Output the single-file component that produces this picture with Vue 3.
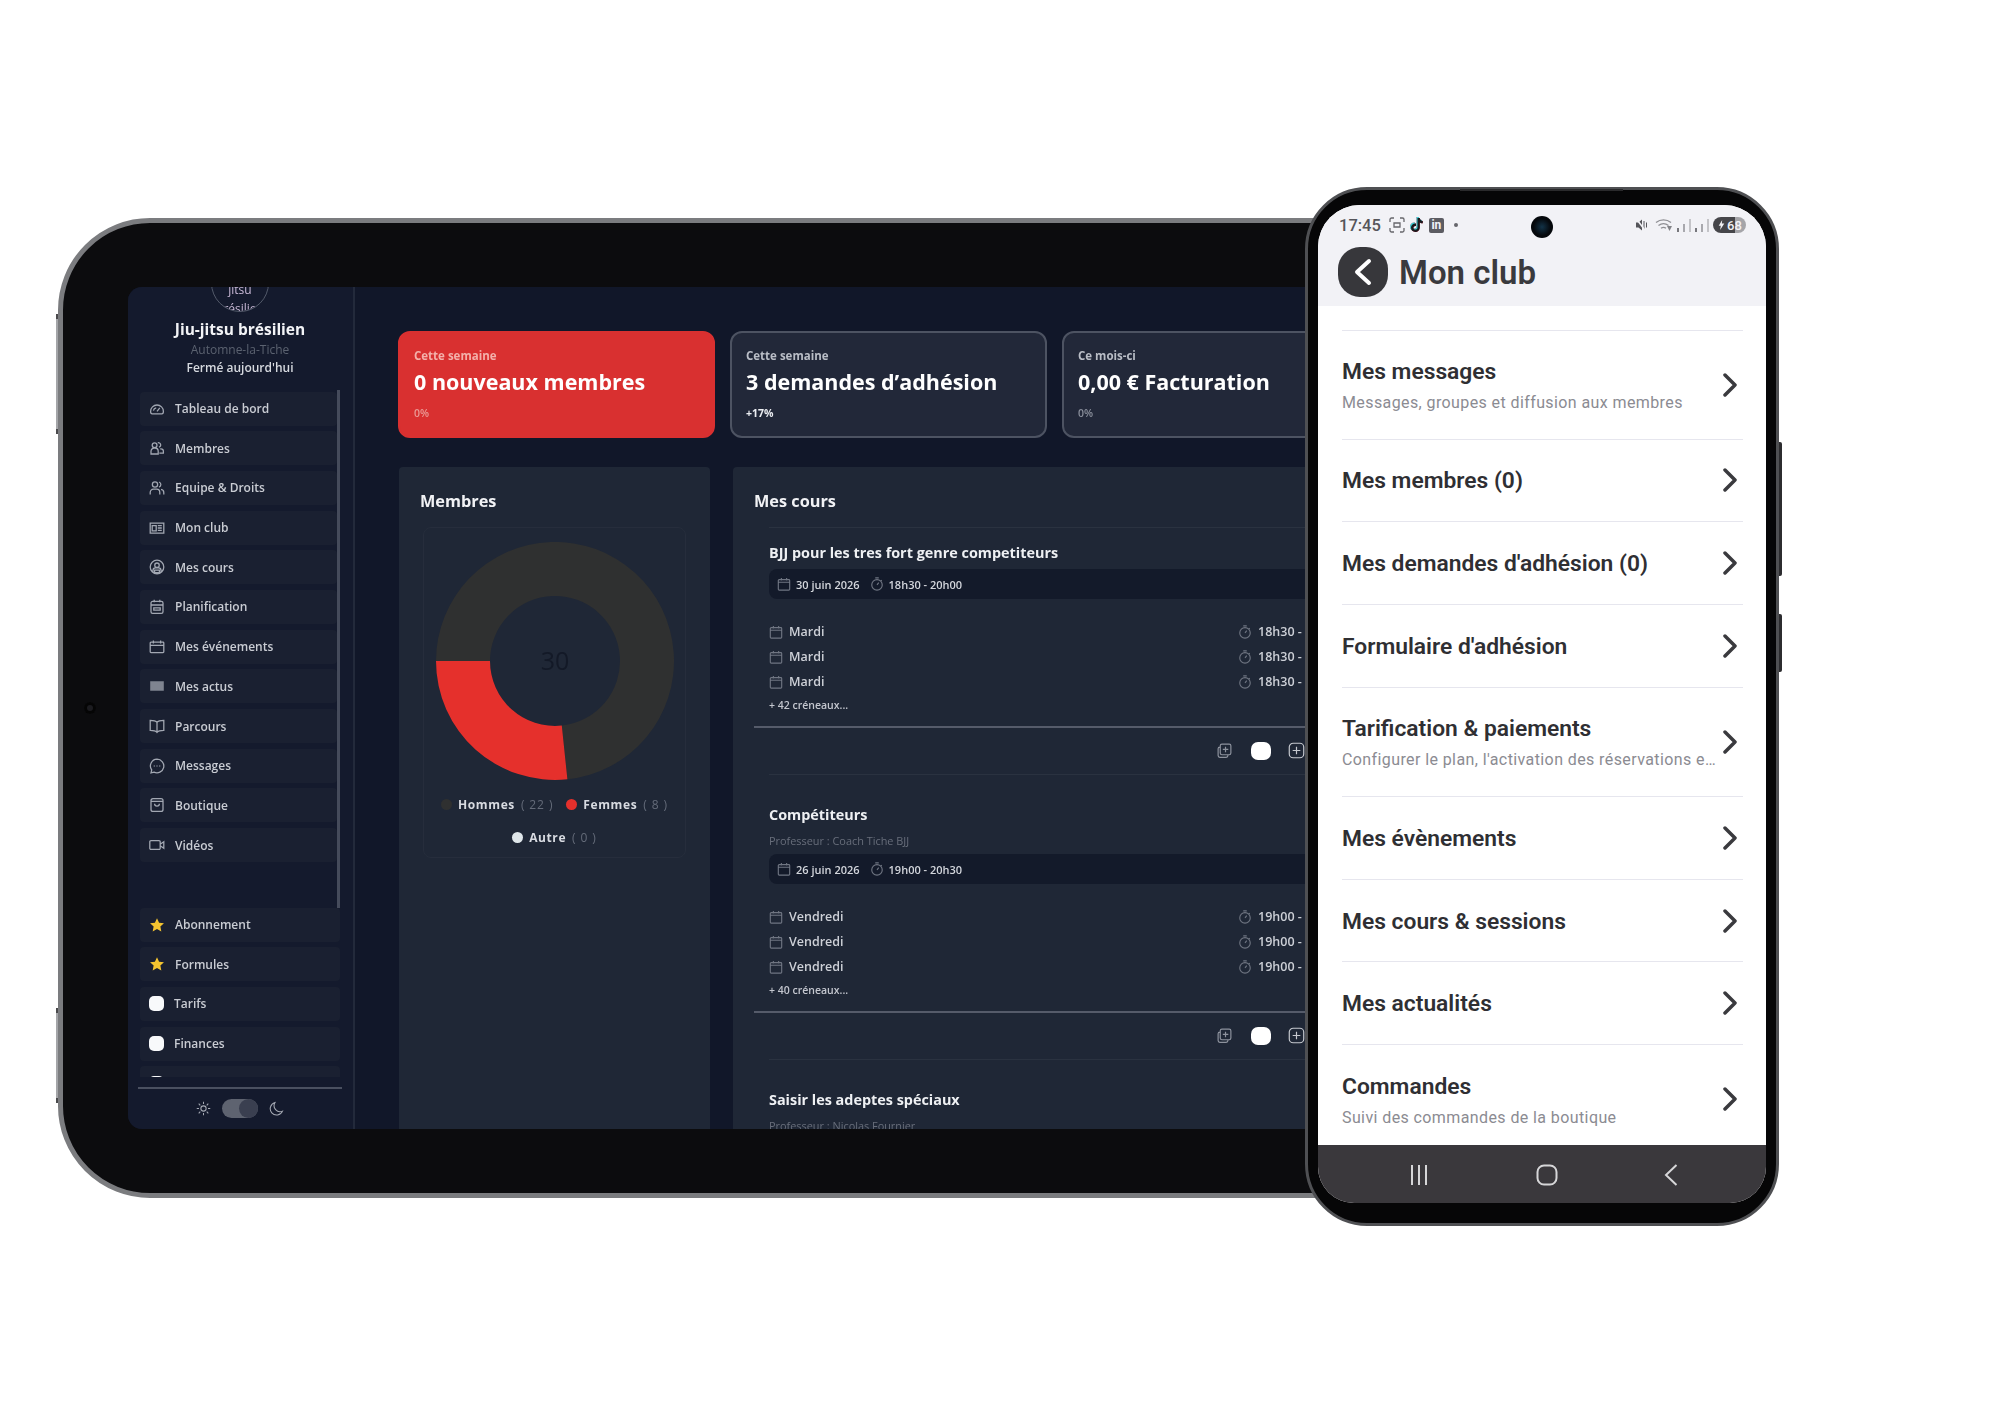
<template>
  <div class="stage">
    <div class="tablet">
      <span class="side-btn btn-a"></span>
      <span class="side-btn btn-b"></span>
      <span class="tablet-cam"></span>
      <div class="screen">
        <aside class="sidebar">
          <div class="logo"><span>Jiu-</span><span>jitsu</span><span>brésilien</span></div>
          <h1 class="club-name">Jiu-jitsu brésilien</h1>
          <p class="club-city">Automne-la-Tiche</p>
          <p class="club-state">Fermé aujourd'hui</p>

          <nav class="nav nav-main">
            <a v-for="item in mainNav" :key="item.label" class="nav-item">
              <svg class="nav-icon" :class="{ solid: item.solid }" viewBox="0 0 20 20"><path :d="item.icon" /></svg>
              {{ item.label }}
            </a>
          </nav>
          <nav class="nav nav-extra">
            <a v-for="item in extraNav" :key="item.label" class="nav-item">
              <svg v-if="item.star" class="nav-icon star" viewBox="0 0 20 20">
                <path d="M10 1.500l2.600 5.600 6.100.7-4.500 4.200 1.200 6-5.400-3-5.400 3 1.200-6L1.300 7.800l6.100-.7z" />
              </svg>
              <span v-else class="blob"></span>
              {{ item.label }}
            </a>
          </nav>

          <div class="theme">
            <svg class="theme-icon" viewBox="0 0 20 20">
              <path d="M10 6.500a3.500 3.500 0 1 0 0 7 3.500 3.500 0 0 0 0-7z M10 1v3 M10 16v3 M1 10h3 M16 10h3 M3.600 3.600l2.100 2.100 M14.300 14.300l2.100 2.100 M3.600 16.400l2.100-2.100 M14.300 5.700l2.100-2.100" />
            </svg>
            <span class="switch"><span class="knob"></span></span>
            <svg class="theme-icon" viewBox="0 0 20 20">
              <path d="M8 2a8 8 0 0 0 10 11.500A8.500 8.500 0 1 1 8 2z" />
            </svg>
          </div>
        </aside>

        <main class="main">
          <section class="stats">
            <div v-for="s in stats" :key="s.title" class="stat" :class="{ red: s.red }">
              <p class="stat-label">{{ s.label }}</p>
              <p class="stat-title">{{ s.title }}</p>
              <p class="stat-delta" :class="{ up: s.up }">{{ s.delta }}</p>
            </div>
          </section>

          <section class="panels">
            <div class="panel panel-members">
              <h2 class="panel-title">Membres</h2>
              <div class="chart-box">
                <svg class="donut" viewBox="0 0 238 238">
                  <path class="arc-dark" d="M0 119A119 119 0 1 1 131.400 237.300L125.800 183.600A65 65 0 1 0 54 119Z" />
                  <path class="arc-red" d="M0 119A119 119 0 0 0 131.400 237.300L125.800 183.600A65 65 0 0 1 54 119Z" />
                  <text x="119" y="128" text-anchor="middle" class="donut-total">30</text>
                </svg>
                <div class="legend">
                  <span v-for="l in legend" :key="l.name" class="legend-item">
                    <i class="dot" :class="l.cls"></i>
                    <b>{{ l.name }}</b>
                    <em>( {{ l.count }} )</em>
                  </span>
                </div>
              </div>
            </div>

            <div class="panel panel-courses">
              <h2 class="panel-title">Mes cours</h2>
              <article v-for="c in courses" :key="c.name" class="course">
                <h3 class="course-name">{{ c.name }}</h3>
                <p v-if="c.teacher" class="course-teacher">{{ c.teacher }}</p>
                <template v-if="c.date">
                  <div class="date-bar">
                    <svg class="mini" viewBox="0 0 16 16"><path :d="calendarIcon" /></svg>
                    <span>{{ c.date }}</span>
                    <svg class="mini clock" viewBox="0 0 16 16"><path :d="clockIcon" /></svg>
                    <span>{{ c.hours }}</span>
                  </div>
                  <ul class="slots">
                    <li v-for="n in 3" :key="n" class="slot">
                      <span class="slot-side">
                        <svg class="mini" viewBox="0 0 16 16"><path :d="calendarIcon" /></svg>
                        {{ c.day }}
                      </span>
                      <span class="slot-time">
                        <svg class="mini" viewBox="0 0 16 16"><path :d="clockIcon" /></svg>
                        {{ c.start }} -
                      </span>
                    </li>
                  </ul>
                  <p class="more">{{ c.more }}</p>
                  <div class="course-foot">
                    <svg class="act" viewBox="0 0 20 20">
                      <path d="M7 2.500h8.500a2 2 0 0 1 2 2V13a2 2 0 0 1-2 2H7a2 2 0 0 1-2-2V4.500a2 2 0 0 1 2-2z M5 6H4.500a2 2 0 0 0-2 2v8a2 2 0 0 0 2 2H12a2 2 0 0 0 2-2v-1 M11.200 5.500v6.500 M8 8.700h6.500" />
                    </svg>
                    <span class="act-blob"></span>
                    <svg class="act plus" viewBox="0 0 20 20">
                      <path d="M6 1.500h8A4.500 4.500 0 0 1 18.500 6v8a4.500 4.500 0 0 1-4.500 4.500H6A4.500 4.500 0 0 1 1.500 14V6A4.500 4.500 0 0 1 6 1.500z M10 5.500v9 M5.500 10h9" />
                    </svg>
                  </div>
                </template>
              </article>
            </div>
          </section>
        </main>
      </div>
    </div>

    <div class="phone">
      <span class="phone-line"></span>
      <span class="phone-key key-a"></span>
      <span class="phone-key key-b"></span>
      <div class="phone-screen">
        <div class="status">
          <span class="clock-text">17:45</span>
          <svg class="st-icon" viewBox="0 0 16 16">
            <path class="st-line" d="M1 5V2.500A1.500 1.500 0 0 1 2.500 1H5 M11 1h2.500A1.500 1.500 0 0 1 15 2.500V5 M15 11v2.500a1.500 1.500 0 0 1-1.500 1.500H11 M5 15H2.500A1.500 1.500 0 0 1 1 13.500V11 M5 6h6v4H5z" />
          </svg>
          <svg class="st-icon tiktok" viewBox="0 0 16 16">
            <path d="M8.500 1h2.300c.2 1.700 1.300 2.800 3 3v2.300c-1.100 0-2.100-.3-3-.9v5.100c0 2.600-2 4.500-4.500 4.500-2.400 0-4.300-1.900-4.300-4.200 0-2.600 2.200-4.600 5-4.200v2.400c-1.400-.3-2.600.6-2.600 1.800 0 1 .8 1.800 1.900 1.800 1.200 0 2.200-.9 2.200-2.200z" />
          </svg>
          <span class="linkedin">in</span>
          <span class="st-dot"></span>
          <span class="camera"></span>
          <span class="status-right">
            <svg class="mute" viewBox="0 0 13 14">
              <path d="M1 4.500h2.500L7 1.500v11L3.500 9.500H1z M8.500 3h1v8h-1z M11 4.500h1v5h-1z" />
              <path class="mute-slash" d="M1.500 1l9 12" />
            </svg>
            <svg class="wifi" viewBox="0 0 18 14">
              <path class="st-line" d="M1 4.500c4.500-3.500 10.500-3.500 15 0 M3.500 7.500c3.200-2.500 6.800-2.500 10 0 M6 10.300c1.600-1.200 3.400-1.200 5 0" />
              <path class="st-fill" d="M12 8h5l-2.500 5z" />
            </svg>
            <span class="bars"><i></i><i></i><i></i></span>
            <span class="bars"><i></i><i></i><i></i></span>
            <span class="battery">
              <svg viewBox="0 0 10 14"><path d="M6 0L1 8h3l-1 6 6-9H5.500z" /></svg>68
            </span>
          </span>
        </div>
        <header class="phone-head">
          <button class="back">
            <svg viewBox="0 0 20 30"><path d="M16 4L4 15l12 11" /></svg>
          </button>
          <span class="phone-title">Mon club</span>
        </header>
        <div class="menu">
          <div v-for="m in menu" :key="m.title" class="menu-row" :class="{ tall: m.sub }">
            <div class="menu-text">
              <p class="menu-title">{{ m.title }}</p>
              <p v-if="m.sub" class="menu-sub">{{ m.sub }}</p>
            </div>
            <svg class="chevron" viewBox="0 0 14 24"><path d="M2 2l10 10L2 22" /></svg>
          </div>
        </div>
        <div class="android-nav">
          <svg viewBox="0 0 20 22"><path d="M3 1v20 M10 1v20 M17 1v20" /></svg>
          <svg viewBox="0 0 22 22"><rect x="1.500" y="1.500" width="19" height="19" rx="6.500" /></svg>
          <svg viewBox="0 0 14 22"><path d="M12.500 1L2 11l10.500 10" /></svg>
        </div>
      </div>
    </div>
  </div>
</template>

<script setup>
const mainNav = [
  { label: 'Tableau de bord', icon: 'M2 13a8 8 0 1 1 16 0c0 2-1 3-2 3H4c-1 0-2-1-2-3z M10 13l3.500-4.500 M5.500 12a4.500 4.500 0 0 1 3.500-3.500' },
  { label: 'Membres', icon: 'M2.500 17.500v-3.500a4 4 0 0 1 4-4h1a4 4 0 0 1 4 4v3.500z M7 9.500a3 3 0 1 0 0-6 3 3 0 0 0 0 6z M11 3.500a2.800 2.800 0 1 1 1.500 5.500 M14 11h1a3 3 0 0 1 3 3v2.500h-5' },
  { label: 'Equipe & Droits', icon: 'M1.500 18v-2.500A4 4 0 0 1 5.500 11.500h4a4 4 0 0 1 4 4V18 M7.500 9a3.300 3.300 0 1 0 0-6.600 3.300 3.300 0 0 0 0 6.600z M12.500 2.500a3.300 3.300 0 0 1 0 6.300 M15 11.800a4 4 0 0 1 3.500 4V18' },
  { label: 'Mon club', icon: 'M1.500 4h17v12.500h-17z M4 7h5v6.500H4z M11 7h5 M11 10h5 M11 13h5' },
  { label: 'Mes cours', icon: 'M10 1.500a8.500 8.500 0 1 0 0 17 8.500 8.500 0 0 0 0-17z M10 5a2.800 2.800 0 1 0 0 5.600A2.800 2.800 0 0 0 10 5z M5 16v-2a3 3 0 0 1 3-3h4a3 3 0 0 1 3 3v2 M7 14h6v3H7z' },
  { label: 'Planification', icon: 'M4.500 3h11A2 2 0 0 1 17.500 5v11a2 2 0 0 1-2 2h-11a2 2 0 0 1-2-2V5a2 2 0 0 1 2-2z M2.500 7.500h15 M6.500 1v3 M13.500 1v3 M6 11h8v3H6z' },
  { label: 'Mes événements', icon: 'M2.500 4h15a1 1 0 0 1 1 1v11a1 1 0 0 1-1 1h-15a1 1 0 0 1-1-1V5a1 1 0 0 1 1-1z M1.500 8h17 M5.500 2v3.500 M14.500 2v3.500' },
  { label: 'Mes actus', icon: 'M1.500 4h17v12h-17z', solid: true },
  { label: 'Parcours', icon: 'M10 5.500C8.500 3.500 5 3 1.500 3v12.500c3.500 0 7 .5 8.500 2.500 1.500-2 5-2.500 8.500-2.500V3C15 3 11.500 3.500 10 5.500z M10 5.500V18' },
  { label: 'Messages', icon: 'M10 1.500a8.500 8.500 0 1 1-3.800 16.100L2.500 18.500l.9-3.500A8.500 8.500 0 0 1 10 1.500z M6 10h1 M9.500 10h1 M13 10h1' },
  { label: 'Boutique', icon: 'M5 2h10a2.500 2.500 0 0 1 2.500 2.500v11A2.500 2.500 0 0 1 15 18H5a2.500 2.500 0 0 1-2.500-2.500v-11A2.500 2.500 0 0 1 5 2z M2.500 5.500h15 M7 8.500c0 4 6 4 6 0' },
  { label: 'Vidéos', icon: 'M2.500 4.500h10a1.500 1.500 0 0 1 1.500 1.500v8a1.500 1.500 0 0 1-1.500 1.500h-10A1.500 1.500 0 0 1 1 14V6a1.500 1.500 0 0 1 1.500-1.500z M14 9l4.500-3v8L14 11' },
]

const extraNav = [
  { label: 'Abonnement', star: true },
  { label: 'Formules', star: true },
  { label: 'Tarifs' },
  { label: 'Finances' },
  { label: '' },
]

const stats = [
  { label: 'Cette semaine', title: '0 nouveaux membres', delta: '0%', red: true },
  { label: 'Cette semaine', title: '3 demandes d’adhésion', delta: '+17%', up: true },
  { label: 'Ce mois-ci', title: '0,00 € Facturation', delta: '0%' },
]

const legend = [
  { name: 'Hommes', count: 22, cls: 'dark' },
  { name: 'Femmes', count: 8, cls: 'red' },
  { name: 'Autre', count: 0, cls: 'light' },
]

const calendarIcon = 'M2.500 3h11a1 1 0 0 1 1 1v10a1 1 0 0 1-1 1h-11a1 1 0 0 1-1-1V4a1 1 0 0 1 1-1z M1.500 6h13 M5 1v3 M11 1v3'
const clockIcon = 'M8 3a6 6 0 1 0 0 12A6 6 0 0 0 8 3z M6 1h4 M8 9l2-2.500 M12.500 3.500l1 1'

const courses = [
  {
    name: 'BJJ pour les tres fort genre competiteurs',
    date: '30 juin 2026',
    hours: '18h30 - 20h00',
    day: 'Mardi',
    start: '18h30',
    more: '+ 42 créneaux...',
  },
  {
    name: 'Compétiteurs',
    teacher: 'Professeur : Coach Tiche BJJ',
    date: '26 juin 2026',
    hours: '19h00 - 20h30',
    day: 'Vendredi',
    start: '19h00',
    more: '+ 40 créneaux...',
  },
  { name: 'Saisir les adeptes spéciaux', teacher: 'Professeur : Nicolas Fournier' },
]

const menu = [
  { title: 'Mes messages', sub: 'Messages, groupes et diffusion aux membres' },
  { title: 'Mes membres (0)' },
  { title: "Mes demandes d'adhésion (0)" },
  { title: "Formulaire d'adhésion" },
  { title: 'Tarification & paiements', sub: "Configurer le plan, l'activation des réservations et les paiements" },
  { title: 'Mes évènements' },
  { title: 'Mes cours & sessions' },
  { title: 'Mes actualités' },
  { title: 'Commandes', sub: 'Suivi des commandes de la boutique' },
]
</script>

<style>
html,
body {
  margin: 0;
  background: #fff;
}
</style>

<style scoped>
.stage {
  position: relative;
  width: 2000px;
  height: 1414px;
  overflow: hidden;
  background: #fff;
  font-family: "Open Sans", "Liberation Sans", sans-serif;
}

p,
h1,
h2,
h3,
ul {
  margin: 0;
  padding: 0;
  list-style: none;
}

/* tablet */
.tablet {
  position: absolute;
  left: 58px;
  top: 218px;
  width: 1500px;
  height: 980px;
  box-sizing: border-box;
  padding: 64px 0 64px 65px;
  background: #0c0c0e;
  border: 5px solid #7b7c7f;
  border-radius: 92px;
}

.side-btn {
  position: absolute;
  left: -7px;
  width: 2px;
  box-sizing: border-box;
  background: #a4a5a8;
  border-top: 5px solid #4a4a4c;
  border-bottom: 5px solid #4a4a4c;
}

.btn-a {
  top: 91px;
  height: 120px;
}

.btn-b {
  top: 785px;
  height: 95px;
}

.tablet-cam {
  position: absolute;
  left: 21px;
  top: 479px;
  width: 12px;
  height: 12px;
  border-radius: 50%;
  background: #000;
  box-shadow: inset 0 0 0 3px #050505, inset 0 0 0 6px #1c1c20;
}

.screen {
  display: flex;
  height: 100%;
  overflow: hidden;
  background: #111729;
  border-radius: 14px 0 0 14px;
  filter: blur(0.5px);
}

.sidebar {
  flex: none;
  width: 227px;
  box-sizing: border-box;
  padding: 0 13px 0 12px;
  background: #141a2d;
  border-right: 2px solid #232a3b;
  text-align: center;
}

.logo {
  display: flex;
  flex-direction: column;
  align-items: center;
  box-sizing: border-box;
  width: 58px;
  height: 58px;
  margin: -33px auto 0;
  padding-top: 6px;
  overflow: hidden;
  border: 1.500px solid #535a6a;
  border-radius: 50%;
  color: #c9b9d6;
  font-size: 12px;
  line-height: 19px;
}

.club-name {
  margin-top: 5.500px;
  color: #f2f3f6;
  font-size: 15.500px;
  font-weight: 700;
  line-height: 22px;
}

.club-city {
  margin-top: 1px;
  color: #5b6270;
  font-size: 12px;
  line-height: 18px;
}

.club-state {
  color: #d6d9df;
  font-size: 12px;
  font-weight: 600;
  line-height: 18px;
}

.nav {
  display: flex;
  flex-direction: column;
  gap: 5.700px;
  text-align: left;
}

.nav-main {
  height: 518px;
  box-sizing: border-box;
  margin-top: 13px;
  padding-top: 2px;
  border-right: 3px solid #454b5b;
}

.nav-extra {
  height: 169px;
  overflow: hidden;
}

.nav-item {
  display: flex;
  flex: none;
  align-items: center;
  gap: 10px;
  height: 34px;
  padding-left: 9px;
  background: #1a2031;
  border-radius: 4px;
  color: #c9ccd3;
  font-size: 12px;
  font-weight: 600;
}

.nav-icon {
  flex: none;
  width: 16px;
  height: 16px;
  fill: none;
  stroke: #a2a7b2;
  stroke-width: 1.600;
}

.nav-icon.solid {
  fill: #7f8490;
  stroke: none;
}

.nav-icon.star {
  fill: #f4c430;
  stroke: none;
}

.blob {
  flex: none;
  width: 15px;
  height: 15px;
  border-radius: 5px;
  background: #f8f9fb;
}

.theme {
  display: flex;
  align-items: center;
  justify-content: center;
  gap: 11px;
  height: 40px;
  margin: 10px -2px 0;
  border-top: 2px solid #4a5060;
}

.theme-icon {
  width: 15px;
  height: 15px;
  fill: none;
  stroke: #a5a9b3;
  stroke-width: 1.400;
}

.switch {
  position: relative;
  display: block;
  width: 36px;
  height: 19px;
  border-radius: 10px;
  background: #5e6370;
}

.knob {
  position: absolute;
  right: 0;
  top: 0;
  width: 19px;
  height: 19px;
  border-radius: 50%;
  background: #3a3f50;
}

.main {
  flex: 1;
  min-width: 0;
  padding: 44px 0 0 43px;
  overflow: hidden;
}

.stats {
  display: flex;
  gap: 15px;
}

.stat {
  flex: none;
  width: 317px;
  height: 107px;
  box-sizing: border-box;
  padding: 15px 14px;
  background: #222839;
  border: 2px solid #4d5362;
  border-radius: 12px;
  color: #fff;
}

.stat.red {
  background: #d93030;
  border-color: #d93030;
}

.stat-label {
  color: #b9bdc6;
  font-size: 11.500px;
  font-weight: 700;
  line-height: 16px;
}

.red .stat-label {
  color: #f3b0aa;
}

.stat-title {
  margin-top: 3px;
  font-size: 21.500px;
  font-weight: 700;
  line-height: 30px;
  white-space: nowrap;
}

.stat-delta {
  margin-top: 8px;
  color: #8b909c;
  font-size: 10.500px;
  font-weight: 600;
  line-height: 16px;
}

.red .stat-delta {
  color: #ea9a95;
}

.stat-delta.up {
  color: #eceef2;
  font-weight: 700;
}

.panels {
  display: flex;
  gap: 23px;
  margin-top: 29px;
  margin-left: 1px;
}

.panel {
  flex: none;
  height: 700px;
  box-sizing: border-box;
  padding: 24px 0 0 21px;
  overflow: hidden;
  background: #1f2736;
  border-radius: 4px 4px 0 0;
}

.panel-members {
  width: 311px;
}

.panel-courses {
  width: 620px;
}

.panel-title {
  margin-bottom: 16px;
  color: #f1f2f5;
  font-size: 16.300px;
  font-weight: 700;
  line-height: 20px;
}

.chart-box {
  display: flex;
  flex-direction: column;
  align-items: center;
  box-sizing: border-box;
  width: 263px;
  height: 331px;
  margin-left: 3px;
  padding-top: 14px;
  border: 1px solid rgba(255, 255, 255, 0.03);
  border-radius: 8px;
}

.donut {
  flex: none;
  width: 238px;
  height: 238px;
}

.arc-dark {
  fill: #2f3030;
}

.arc-red {
  fill: #e5302c;
}

.donut-total {
  fill: #131927;
  font-size: 25px;
}

.legend {
  display: flex;
  flex-wrap: wrap;
  justify-content: center;
  gap: 13px 13px;
  margin-top: 14px;
}

.legend-item {
  display: flex;
  align-items: center;
  gap: 6px;
  height: 20px;
  white-space: nowrap;
  font-size: 12px;
}

.legend-item b {
  color: #d8dbe1;
  font-weight: 700;
  letter-spacing: 0.600px;
}

.legend-item em {
  color: #646b79;
  font-style: normal;
  letter-spacing: 0.900px;
}

.dot {
  width: 11px;
  height: 11px;
  border-radius: 50%;
}

.dot.dark {
  background: #2f3030;
}

.dot.red {
  background: #e5302c;
}

.dot.light {
  background: #dfe6ea;
}

.course {
  margin-left: 15px;
  padding-top: 15px;
  border-top: 1px solid rgba(255, 255, 255, 0.05);
}

.course + .course {
  padding-top: 30px;
}

.course-name {
  color: #eef0f3;
  font-size: 14.400px;
  font-weight: 700;
  line-height: 20px;
  white-space: nowrap;
}

.course-teacher {
  margin-top: 8px;
  color: #686e7b;
  font-size: 10.900px;
  line-height: 16px;
}

.date-bar {
  display: flex;
  align-items: center;
  gap: 5px;
  height: 30px;
  margin-top: 6px;
  padding-left: 8px;
  background: #131a2a;
  border-radius: 8px 0 0 8px;
  color: #d3d6dc;
  font-size: 11px;
  font-weight: 600;
}

.course-teacher + .date-bar {
  margin-top: 5px;
}

.clock {
  margin-left: 5px;
}

.mini {
  flex: none;
  width: 14px;
  height: 14px;
  fill: none;
  stroke: #6f7582;
  stroke-width: 1.300;
}

.slots {
  margin-top: 20px;
}

.slot {
  display: flex;
  align-items: center;
  height: 25px;
  color: #cdd0d7;
  font-size: 12.500px;
  font-weight: 600;
  white-space: nowrap;
}

.slot-side,
.slot-time {
  display: flex;
  align-items: center;
  gap: 6px;
}

.slot-time {
  margin-left: 469px;
}

.slot-side {
  flex: none;
  width: 0;
}

.more {
  margin-top: 3px;
  color: #c3c6ce;
  font-size: 10.500px;
  font-weight: 600;
  line-height: 16px;
}

.course-foot {
  display: flex;
  align-items: center;
  height: 48px;
  box-sizing: border-box;
  margin: 13px 0 0 -15px;
  padding: 0 0 1px 462px;
  border-top: 2px solid #555b6a;
}

.act {
  flex: none;
  width: 17px;
  height: 17px;
  fill: none;
  stroke: #8d929d;
  stroke-width: 1.400;
}

.act-blob {
  flex: none;
  width: 20px;
  height: 18px;
  margin-left: 18px;
  border-radius: 7px;
  background: #fff;
}

.plus {
  margin-left: 17px;
  stroke: #c6c9cf;
}

/* phone */
.phone {
  position: absolute;
  left: 1305px;
  top: 187px;
  width: 474px;
  height: 1039px;
  box-sizing: border-box;
  padding: 15px 10px 20px;
  background: #060607;
  border: 3px solid #4f5053;
  border-radius: 62px;
}

.phone-line {
  position: absolute;
  left: 152px;
  top: -1px;
  width: 163px;
  height: 2px;
  background: #2a2a2c;
}

.phone-key {
  position: absolute;
  right: -6px;
  width: 3px;
  border-radius: 0 2px 2px 0;
  background: #2c2c2f;
}

.key-a {
  top: 252px;
  height: 134px;
}

.key-b {
  top: 424px;
  height: 58px;
}

.phone-screen {
  display: flex;
  flex-direction: column;
  height: 100%;
  overflow: hidden;
  background: #fff;
  border-radius: 42px 42px 36px 36px;
  font-family: Roboto, "Liberation Sans", sans-serif;
}

.status {
  position: relative;
  display: flex;
  flex: none;
  align-items: center;
  gap: 4px;
  height: 42px;
  box-sizing: border-box;
  padding: 0 20px 2px 21px;
  background: #f2f2f6;
  color: #55555a;
}

.clock-text {
  margin-right: 4px;
  font-size: 16.500px;
  font-weight: 500;
}

.st-icon {
  flex: none;
  width: 16px;
  height: 16px;
}

.st-line {
  fill: none;
  stroke: #66666b;
  stroke-width: 1.300;
}

.st-fill {
  fill: #55555a;
}

.tiktok {
  fill: #1a1a1d;
  filter: drop-shadow(-0.6px -0.4px 0 #38d6da) drop-shadow(0.6px 0.4px 0 #e8345b);
}

.linkedin {
  width: 15px;
  height: 15px;
  border-radius: 2px;
  background: #5c5c62;
  color: #f2f2f6;
  font-size: 12px;
  font-weight: 700;
  line-height: 15px;
  text-align: center;
}

.st-dot {
  width: 4px;
  height: 4px;
  margin-left: 6px;
  border-radius: 50%;
  background: #66666b;
}

.camera {
  position: absolute;
  left: 213px;
  top: 11px;
  width: 22px;
  height: 22px;
  border-radius: 50%;
  background: radial-gradient(circle, #123247 0, #05080c 55%);
}

.status-right {
  display: flex;
  align-items: center;
  gap: 4px;
  margin-left: auto;
}

.mute {
  width: 13px;
  height: 14px;
  margin-right: 3px;
  fill: #55555a;
}

.mute-slash {
  fill: none;
  stroke: #f2f2f6;
  stroke-width: 1.500;
}

.wifi {
  width: 18px;
  height: 14px;
  opacity: 0.7;
}

.bars {
  display: flex;
  align-items: flex-end;
  gap: 4px;
  height: 13px;
}

.bars i {
  width: 2px;
  height: 4px;
  background: #77777c;
}

.bars i:nth-child(2) {
  height: 8px;
  background: #a8a8ad;
}

.bars i:nth-child(3) {
  height: 13px;
  background: #c4c4c8;
}

.battery {
  display: flex;
  align-items: center;
  gap: 2px;
  width: 33px;
  height: 16px;
  box-sizing: border-box;
  padding-left: 5px;
  border-radius: 9px;
  background: linear-gradient(90deg, #46464a 0 68%, #a5a5a9 68%);
  color: #f2f2f6;
  font-size: 13px;
  font-weight: 500;
}

.battery svg {
  width: 7px;
  height: 10px;
  fill: #f2f2f6;
}

.phone-head {
  display: flex;
  flex: none;
  align-items: center;
  gap: 11px;
  height: 59px;
  padding: 0 0 9px 20px;
  box-sizing: border-box;
  background: #f2f2f6;
}

.back {
  display: flex;
  align-items: center;
  justify-content: center;
  width: 50px;
  height: 50px;
  padding: 0;
  background: #37373b;
  border: 0;
  border-radius: 22px;
}

.back svg {
  width: 20px;
  height: 30px;
  fill: none;
  stroke: #fff;
  stroke-width: 4;
  stroke-linecap: round;
  stroke-linejoin: round;
}

.phone-title {
  color: #3a3a3e;
  font-size: 33px;
  font-weight: 600;
}

.menu {
  flex: 1;
  min-height: 0;
  overflow: hidden;
  padding: 24px 23px 0 24px;
}

.menu-row {
  display: flex;
  align-items: center;
  gap: 3px;
  height: 82.900px;
  box-sizing: border-box;
  padding-right: 6px;
  border-top: 1.500px solid #e6e6ee;
}

.menu-row.tall {
  height: 108.500px;
}

.menu-text {
  flex: 1;
  min-width: 0;
  padding-top: 2px;
}

.menu-row.tall .menu-text {
  padding-top: 3px;
}

.menu-title {
  color: #2f2f33;
  font-size: 22.800px;
  font-weight: 600;
  line-height: 28px;
}

.menu-sub {
  margin-top: 6px;
  overflow: hidden;
  color: #8b8b92;
  font-size: 16px;
  letter-spacing: 0.400px;
  line-height: 22px;
  text-overflow: ellipsis;
  white-space: nowrap;
}

.chevron {
  flex: none;
  width: 14px;
  height: 24px;
  fill: none;
  stroke: #3a3a3e;
  stroke-width: 3.500;
  stroke-linecap: round;
  stroke-linejoin: round;
}

.android-nav {
  display: flex;
  flex: none;
  align-items: center;
  justify-content: space-between;
  height: 58px;
  box-sizing: border-box;
  padding: 2px 88px 0 91px;
  background: #3a383c;
}

.android-nav svg {
  height: 22px;
  fill: none;
  stroke: #d6d6d8;
  stroke-width: 2;
}

.android-nav svg:nth-child(1) {
  width: 20px;
}

.android-nav svg:nth-child(2) {
  width: 22px;
}

.android-nav svg:nth-child(3) {
  width: 14px;
}
</style>
